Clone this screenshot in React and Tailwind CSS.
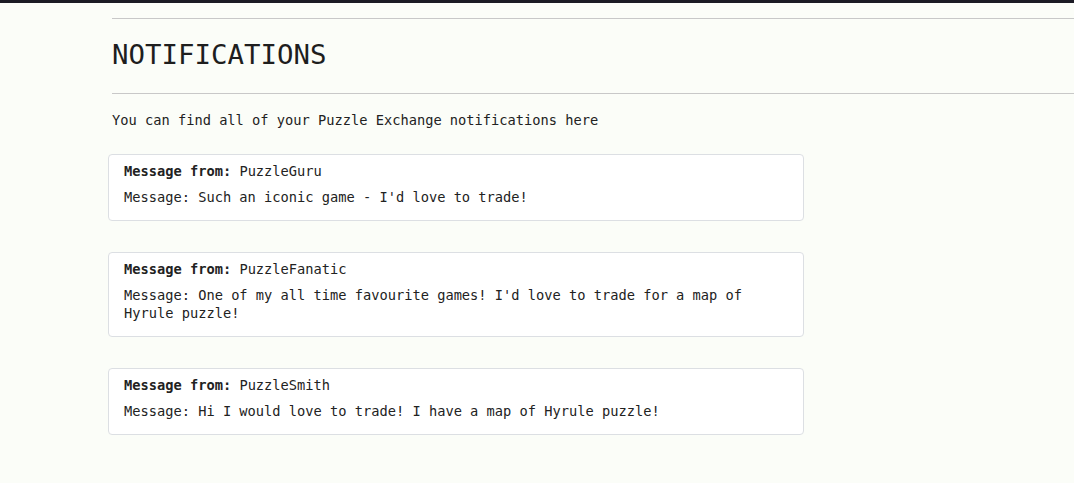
import React from 'react';

const notifications = [
  { from: 'PuzzleGuru', message: "Such an iconic game - I'd love to trade!" },
  { from: 'PuzzleFanatic', message: "One of my all time favourite games! I'd love to trade for a map of Hyrule puzzle!" },
  { from: 'PuzzleSmith', message: 'Hi I would love to trade! I have a map of Hyrule puzzle!' },
];

export default function App() {
  return (
    <div
      className="min-h-[483px] bg-[#fbfdf8] text-[#222] border-t-[3px] border-[#1b1b24]"
      style={{ fontFamily: '"DejaVu Sans Mono", monospace' }}
    >
      <div className="pl-[112px] pt-[15px]">
        {/* Header */}
        <div className="border-t border-[#c8c8c8]" />
        <h1 className="h-[74px] flex items-center text-[27.4px] leading-none text-[#1e1e1e] pb-[2px]">
          NOTIFICATIONS
        </h1>
        <div className="border-t border-[#c8c8c8]" />
        <p className="mt-[17px] text-[13.7px] leading-[18px]">
          You can find all of your Puzzle Exchange notifications here
        </p>

        {/* Notification cards */}
        <div className="mt-[25px] -ml-1 w-[696px] flex flex-col gap-[31px]">
          {notifications.map(n => (
            <div
              key={n.from}
              className="bg-white border border-[#dcdfe3] rounded-[4px] px-[15px] pt-[7px] pb-[14px] text-[13.7px] leading-[18px]"
            >
              <p>
                <strong className="font-bold">Message from:</strong> {n.from}
              </p>
              <p className="mt-2">Message: {n.message}</p>
            </div>
          ))}
        </div>
      </div>
    </div>
  );
}
